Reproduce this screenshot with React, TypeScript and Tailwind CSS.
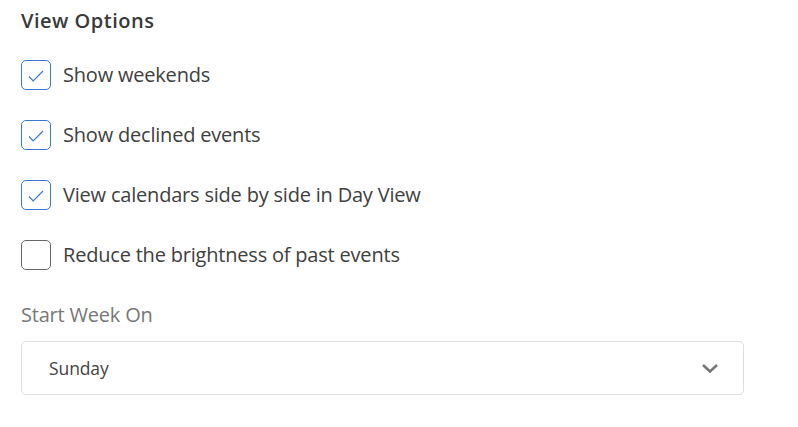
import React from "react";

const Check = ({ checked }: { checked: boolean }) => (
  <div
    className={
      "w-[30px] h-[30px] rounded-[5px] border flex items-center justify-center shrink-0 " +
      (checked ? "border-[#3a78d4]" : "border-[#666666]")
    }
  >
    {checked && (
      <svg width="18" height="14" viewBox="0 0 18 14" fill="none" className="mt-[2px]">
        <path d="M2 7.5 L6.2 11.8 L16 2" stroke="#3a78d4" strokeWidth="1.2" />
      </svg>
    )}
  </div>
);

export default function App() {
  const items: [string, boolean][] = [
    ["Show weekends", true],
    ["Show declined events", true],
    ["View calendars side by side in Day View", true],
    ["Reduce the brightness of past events", false],
  ];
  return (
    <div
      className="w-[798px] h-[427px] bg-white pl-[21px] pr-[54px] pt-[7px]"
      style={{ fontFamily: '"Open Sans", "Noto Sans", sans-serif' }}
    >
      <div className="text-[20px] font-semibold text-[#3a3a3a] leading-[28px] tracking-[0.5px]">View Options</div>
      <div className="mt-[25px] flex flex-col gap-[30px]">
        {items.map(([t, c]) => (
          <div key={t} className="flex items-center gap-[12px] h-[30px]">
            <Check checked={c} />
            <span className="text-[20px] text-[#404040] tracking-[-0.2px]">{t}</span>
          </div>
        ))}
      </div>
      <div className="mt-[31px] text-[20px] text-[#777] leading-[28px] tracking-[-0.2px]">Start Week On</div>
      <div className="mt-[12px] h-[54px] border border-[#dedede] rounded-[5px] flex items-center justify-between pl-[27px] pr-[24px]">
        <span className="text-[17.5px] text-[#444] tracking-[-0.1px]">Sunday</span>
        <svg width="18" height="11" viewBox="0 0 18 11" fill="none">
          <path d="M2 2 L9 8.5 L16 2" stroke="#777" strokeWidth="2.6" />
        </svg>
      </div>
    </div>
  );
}
